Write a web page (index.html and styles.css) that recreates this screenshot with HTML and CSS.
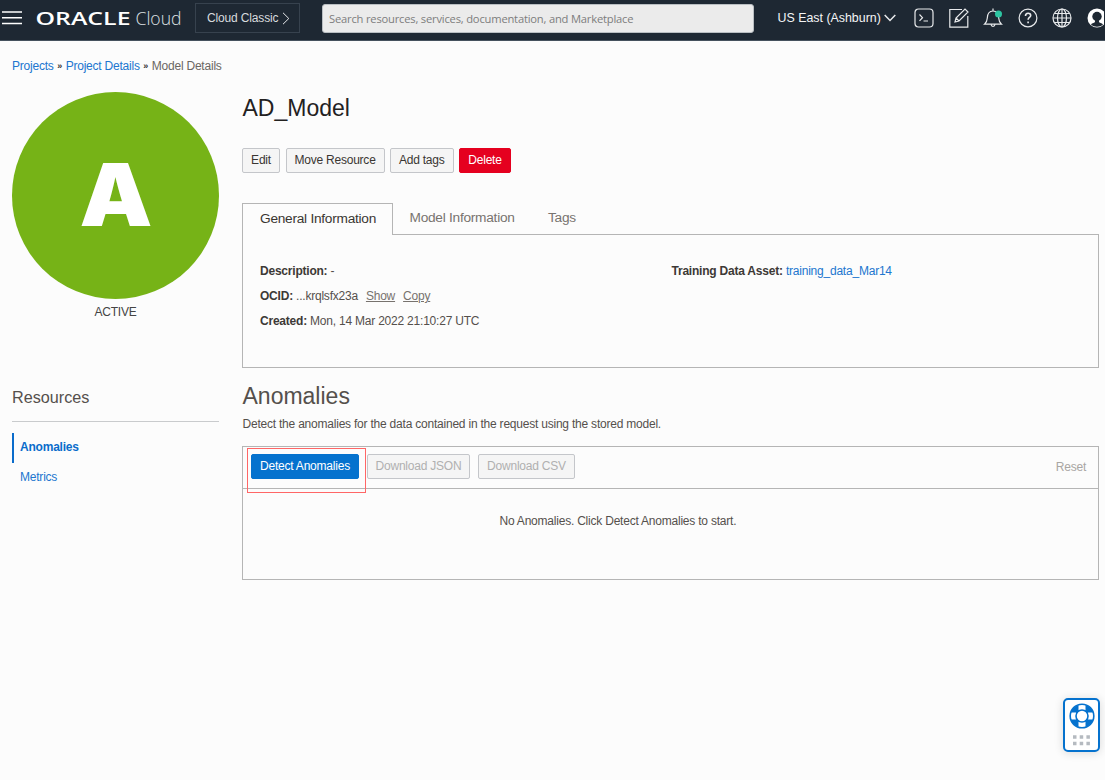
FILE: index.html
```html
<!DOCTYPE html>
<html lang="en">
<head>
<meta charset="utf-8">
<title>Model Details</title>
<link rel="stylesheet" href="styles.css">
</head>
<body>
<header class="topbar">
  <svg class="menu" width="20" height="14" viewBox="0 0 20 14"><path d="M0 1h20M0 6.7h20M0 12.5h20"/></svg>
  <svg class="logo" width="150" height="34" viewBox="0 0 150 34">
    <text class="oracle" x="-.500" y="22.500" textLength="95" lengthAdjust="spacingAndGlyphs">ORACLE</text>
    <text class="cloud" x="99.500" y="22.500" textLength="46" lengthAdjust="spacingAndGlyphs">Cloud</text>
  </svg>
  <a class="classic"><span>Cloud Classic</span><svg width="8" height="13" viewBox="0 0 8 13"><path d="M1 .8l5.8 5.7L1 12.2"/></svg></a>
  <div class="search">Search resources, services, documentation, and Marketplace</div>
  <div class="region"><span>US East (Ashburn)</span><svg width="12" height="8" viewBox="0 0 12 8"><path d="M.7 1L6 6.5 11.3 1"/></svg></div>
  <nav class="tools">
    <svg viewBox="0 0 20 20"><rect x="1" y="1" width="18" height="18" rx="3.5"/><path d="M5.5 6.5l3 3.2-3 3.2M9.5 13h4.5"/></svg>
    <svg viewBox="0 0 20 20"><path d="M13 1.5H.8v17.7h18V8M6 14l1-4L16 1l3 3-9 9zM7 10l3 3"/></svg>
    <svg viewBox="0 0 20 20"><path d="M1.5 16.2h17c-2-1.6-2.6-3-2.8-6.2C15.500 5.500 14 3 10 3S4.500 5.500 4.300 10c-.2 3.200-.8 4.600-2.800 6.200zM8 16.500c.4 2.600 3.600 2.600 4 0M10 3V.6"/><circle class="dot" cx="15.500" cy="6" r="3.500"/></svg>
    <svg viewBox="0 0 20 20"><circle cx="10" cy="10" r="8.900"/><path class="mark" d="M7.500 8c0-3.700 5.200-3.600 5.200-.5 0 2-2.600 2-2.600 4.300M10.100 13.500v1.700"/></svg>
    <svg viewBox="0 0 20 20"><circle cx="10" cy="10" r="9"/><ellipse cx="10" cy="10" rx="4.500" ry="9"/><path d="M10 1v18M1 10h18M2.500 5.500h15M2.500 14.500h15"/></svg>
    <svg viewBox="0 0 20 20"><circle class="disc" cx="10" cy="10" r="9.500"/><circle class="person" cx="10" cy="8.500" r="4.700"/><path class="person" d="M8 11.500h4v2.300c0 1 3 1.200 4 2.700-3 3-9 3-12 0 1-1.500 4-1.700 4-2.700z"/></svg>
  </nav>
</header>
<div class="crumbs"><a>Projects</a><b>»</b><a>Project Details</a><b>»</b><span>Model Details</span></div>
<div class="page">
  <aside>
    <svg class="badge" width="207" height="207" viewBox="0 0 207 207"><circle cx="103.500" cy="103.500" r="103.500"/><text x="67.500" y="134" textLength="73" lengthAdjust="spacingAndGlyphs">A</text></svg>
    <div class="state">ACTIVE</div>
    <h3>Resources</h3>
    <ul><li class="on">Anomalies</li><li>Metrics</li></ul>
  </aside>
  <main>
    <h1>AD_Model</h1>
    <div class="actions"><button class="w38">Edit</button><button class="w99">Move Resource</button><button class="w64">Add tags</button><button class="w52 danger">Delete</button></div>
    <div class="tabs"><span class="tab on">General Information</span><span class="tab t2">Model Information</span><span class="tab t3">Tags</span></div>
    <section class="info">
      <div class="col">
        <p><b>Description:</b> -</p>
        <p><b>OCID:</b> <span>...krqlsfx23a</span><u>Show</u><u>Copy</u></p>
        <p><b>Created:</b> <span>Mon, 14 Mar 2022 21:10:27 UTC</span></p>
      </div>
      <div class="col"><p><b>Training Data Asset:</b> <a>training_data_Mar14</a></p></div>
    </section>
    <h2>Anomalies</h2>
    <p class="desc">Detect the anomalies for the data contained in the request using the stored model.</p>
    <section class="results">
      <div class="bar">
        <div class="hl"><button class="w108 primary">Detect Anomalies</button><i></i></div>
        <button class="w103 off">Download JSON</button><button class="w97 off">Download CSV</button>
        <span class="reset">Reset</span>
      </div>
      <div class="empty">No Anomalies. Click Detect Anomalies to start.</div>
    </section>
  </main>
</div>
<div class="help">
  <svg width="26" height="26" viewBox="0 0 26 26"><circle class="ring" cx="13" cy="13" r="8.800"/><path class="gaps" d="M13 1.700v5.500M13 18.800v5.500M1.700 13h5.500M18.800 13h5.500"/><circle class="edge" cx="13" cy="13" r="11.800"/><circle class="edge" cx="13" cy="13" r="6"/></svg>
  <svg width="17" height="11" viewBox="0 0 17 11"><path class="dots" d="M0 2h17M0 8.500h17"/></svg>
</div>
</body>
</html>
```
FILE: styles.css
```css
* { box-sizing: border-box; }
body { margin: 0; height: 780px; overflow: hidden; background: #fcfcfc; color: #55504c; font: 12px/16px "Liberation Sans", Arial, sans-serif; letter-spacing: -.217px; }
svg { display: block; flex: none; fill: none; stroke: #e8eaec; letter-spacing: 0; }
h1, h2, h3, p, ul { margin: 0; padding: 0; font-weight: 400; }
a { color: #2176cf; }
.topbar { display: flex; align-items: flex-start; height: 41px; background: #1e2833; border-bottom: 1px solid #46525e; white-space: nowrap; letter-spacing: 0; }
.menu { margin: 11px 0 0 2px; stroke: #fff; stroke-width: 1.6; }
.logo { margin: 2px 0 0 13.500px; stroke: none; fill: #fff; overflow: visible; }
.oracle { font: 600 17.500px "Open Sans", sans-serif; }
.cloud { font: 300 18.500px "Open Sans", sans-serif; fill: #dfe2e4; }
.classic { display: flex; align-items: center; gap: 4px; width: 105px; height: 30px; margin: 3px 0 0 9.500px; padding-left: 11px; border: 1px solid #37424e; color: #d8dbde; font-size: 12px; letter-spacing: -.15px; }
.search { width: 432px; height: 29px; margin: 4px 0 0 22px; padding-left: 6px; border: 1px solid #b9bec2; border-radius: 3px; background: #ebebeb; color: #7d7d7d; font: 11.200px/28px "Open Sans", sans-serif; letter-spacing: -.2px; }
.region { display: flex; align-items: center; gap: 3px; margin: 10px 0 0 23.500px; color: #f4f5f6; font-size: 12.400px; }
.region svg { stroke-width: 1.5; }
.tools { display: flex; gap: 14.500px; margin: 8px 0 0 18.600px; width: 190px; overflow: hidden; }
.tools svg { width: 20px; height: 20px; stroke-width: 1.2; }
.tools .dot { fill: #2dc5a2; stroke: none; }
.tools .mark { stroke-width: 1.6; }
.tools .disc { fill: #fff; stroke: none; }
.tools .person { fill: #1e2833; stroke: none; }
.crumbs { display: flex; height: 51px; padding: 17px 0 0 12px; color: #6b6763; }
.crumbs b { width: 12px; text-align: center; font-size: 9px; color: #333; }
.page { display: grid; grid-template-columns: 207px 857px; column-gap: 23px; padding-left: 12px; }
.badge { stroke: none; fill: #76b317; }
.badge text { fill: #fff; font: 900 87px Inter, sans-serif; }
.state { margin-top: 5px; text-align: center; color: #444; }
h3 { margin-top: 66px; padding-bottom: 12px; border-bottom: 1px solid #c9cbcd; font-size: 16.200px; line-height: 23px; letter-spacing: 0; }
ul { margin-top: 11px; list-style: none; }
li { height: 30px; padding-left: 6px; border-left: 2px solid transparent; line-height: 29px; color: #2176cf; }
li.on { border-color: #0a6ccb; color: #0a6ccb; font-weight: 700; }
h1 { height: 56px; padding-left: .5px; color: #23211f; font-size: 23px; line-height: 32px; letter-spacing: 0; }
.actions { display: flex; gap: 5.500px; }
button { flex: none; height: 25px; padding: 0; border: 1px solid #c4c6ca; border-radius: 2px; background: #f5f5f5; color: #3a3632; font: inherit; line-height: 23px; letter-spacing: inherit; white-space: nowrap; }
.danger { border-color: #e5001f; background: #e5001f; color: #fff; }
.primary { border-color: #0572ce; background: #0572ce; color: #fff; }
.off { color: #b0b0b0; }
.w38 { width: 38px; } .w99 { width: 99px; } .w64 { width: 63.500px; } .w52 { width: 52px; }
.w108 { width: 108px; } .w103 { width: 103px; } .w97 { width: 97px; }
.tabs { display: flex; height: 31px; margin-top: 30px; font-size: 13.700px; line-height: 30px; letter-spacing: -.26px; color: #78736f; }
.tab.on { width: 151px; height: 32px; padding-left: 17px; border: 1px solid #b5b5b5; border-bottom: 0; background: #fcfcfc; color: #3a3632; z-index: 1; }
.t2 { width: 138px; padding-left: 16.500px; }
.t3 { padding-left: 17px; }
.info { display: grid; grid-template-columns: 411.500px 1fr; height: 134px; padding: 24px 0 0 17px; border: 1px solid #b5b5b5; }
.info p { height: 25px; line-height: 25px; white-space: nowrap; }
.info b { color: #3d3936; }
.info u { margin-left: 8px; color: #77726e; }
h2 { margin-top: 12px; padding-left: .5px; font-size: 23px; line-height: 32px; letter-spacing: 0; }
.desc { margin-top: 4px; padding-left: .5px; }
.results { height: 134px; margin-top: 14px; border: 1px solid #b5b5b5; }
.bar { display: flex; align-items: flex-start; height: 42px; padding: 7px 12px 0 8px; border-bottom: 1px solid #b5b5b5; }
.hl { position: relative; margin-right: 8px; height: 25px; }
.hl i { position: absolute; left: -4px; top: -6px; width: 119px; height: 45px; border: 1px solid #f66; }
.bar .w97 { margin-left: 8px; }
.reset { margin: 5px 0 0 auto; color: #a9a6a3; }
.empty { padding: 24px 0 0 256.500px; }
.help { position: absolute; left: 1063px; top: 698px; width: 37px; height: 54px; padding: 3px 0 0 3.500px; border: 2px solid #0572ce; border-radius: 5px; background: #fff; box-shadow: 0 1px 10px rgba(0,0,0,.14); }
.help svg + svg { margin: 6px 0 0 4.500px; }
.ring { stroke: #0572ce; stroke-width: 5.600; }
.gaps { stroke: #fff; stroke-width: 7; }
.edge { stroke: #0572ce; stroke-width: 1.600; }
.dots { stroke: #b5bac0; stroke-width: 3.500; stroke-dasharray: 3.500 3.200; }
```
